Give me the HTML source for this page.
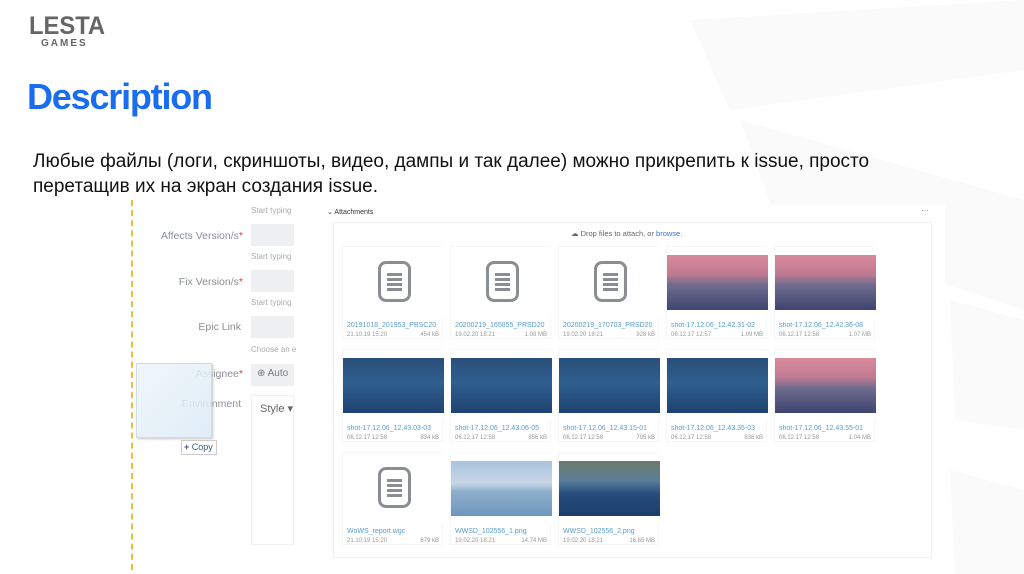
<!DOCTYPE html>
<html><head><meta charset="utf-8"><style>
*{margin:0;padding:0;box-sizing:border-box}
body{width:1024px;height:574px;overflow:hidden;background:#fff;position:relative;font-family:"Liberation Sans",sans-serif}
.a{position:absolute}
.lbl{position:absolute;right:781px;font-size:10.5px;color:#8a8f96;white-space:nowrap}
.st{position:absolute;left:251px;font-size:8px;color:#a9adb2}
.inp{position:absolute;left:251px;width:43px;height:22px;background:#eef0f2}
.tile{position:absolute;width:101px;height:93px;border:1px solid #f5f6f7}
.img{position:absolute;left:0;top:0;width:101px;height:70px;background:#fff}
.doc{position:absolute;left:35px;top:14px;width:33px;height:41px;border:3px solid #8a8d91;border-radius:8px}
.doc i{position:absolute;left:6px;width:15px;height:2.5px;background:#8a8d91}
.nm{position:absolute;left:4px;top:75px;font-size:7px;color:#5a9ccc;white-space:nowrap;width:92px;overflow:hidden}
.dt{position:absolute;left:4px;top:85px;font-size:6px;color:#999;width:92px}
.dt b{float:right;font-weight:normal}
.shot{position:absolute;left:0;top:8px;width:101px;height:55px}
.blue{background:linear-gradient(180deg,#2a4f7a 0%,#2f5f8e 45%,#1f4370 100%)}
.pink{background:linear-gradient(180deg,#d98a9a 0%,#c07a92 35%,#6f6b8e 55%,#3e4570 100%)}
.sky{background:linear-gradient(180deg,#a8c4dc 0%,#c8d6e6 40%,#8fb0cc 55%,#6d97bd 100%)}
.sea{background:linear-gradient(180deg,#6c7a6a 0%,#5b7f9a 35%,#264c7c 60%,#1b3d6b 100%)}
</style></head><body>
<svg class="a" style="left:0;top:0" width="1024" height="574"><polygon points="690,20 1024,0 1024,70 730,110" fill="#fafafa"/><polygon points="740,120 1024,200 1024,310 780,230" fill="#fafafa"/><polygon points="950,300 1024,320 1024,430 955,420" fill="#fafafa"/><polygon points="950,470 1024,490 1024,574 955,574" fill="#fafafa"/></svg>
<div class="a" style="left:29px;top:12px;font-size:25px;font-weight:bold;color:#666;transform:scaleX(0.95);transform-origin:left">LESTA</div>
<div class="a" style="left:41px;top:38px;font-size:10px;font-weight:bold;color:#666;letter-spacing:2px">GAMES</div>
<div class="a" style="left:27px;top:76px;font-size:36px;font-weight:bold;color:#1a6cf0;letter-spacing:-1.2px">Description</div>
<div class="a" style="left:33px;top:149px;font-size:19px;color:#111;line-height:25px;width:960px">Любые файлы (логи, скриншоты, видео, дампы и так далее) можно прикрепить к issue, просто<br>перетащив их на экран создания issue.</div>

<div class="a" style="left:48px;top:200px;width:282px;height:370px;background:#fff"></div>
<div class="a" style="left:131px;top:200px;height:370px;border-left:2px dashed #e8c040"></div>
<div class="st" style="top:206px">Start typing</div>
<div class="lbl" style="top:230px">Affects Version/s<span style="color:#d04040">*</span></div><div class="inp" style="top:224px"></div>
<div class="st" style="top:252px">Start typing</div>
<div class="lbl" style="top:276px">Fix Version/s<span style="color:#d04040">*</span></div><div class="inp" style="top:270px"></div>
<div class="st" style="top:298px">Start typing</div>
<div class="lbl" style="top:321px;right:783px">Epic Link</div><div class="inp" style="top:316px"></div>
<div class="st" style="top:345px">Choose an e</div>
<div class="lbl" style="top:368px">Assignee<span style="color:#d04040">*</span></div><div class="inp" style="top:364px;font-size:10px;color:#777;padding:4px 0 0 6px;white-space:nowrap;overflow:hidden">⊕ Auto</div>
<div class="lbl" style="top:398px;right:783px">Environment</div>
<div class="a" style="left:251px;top:395px;width:43px;height:150px;border:1px solid #f0f0f0;font-size:11px;color:#666;padding:6px 0 0 8px;white-space:nowrap;overflow:hidden">Style ▾</div>
<div class="a" style="left:136px;top:363px;width:76px;height:75px;background:linear-gradient(135deg,#eef5fb,#dcebf6);border:1px solid #c8d8e6;box-shadow:1px 1px 2px #bbb;opacity:.85"></div>
<div class="a" style="left:181px;top:440px;width:36px;height:15px;border:1px solid #ccc;background:#fff;font-size:9px;color:#3a5a88;padding:1px 0 0 2px"><b>+</b> Copy</div>

<div class="a" style="left:330px;top:205px;width:615px;height:362px;background:#fff"></div>
<div class="a" style="left:327px;top:208px;font-size:7px;color:#333">⌄ Attachments</div>
<div class="a" style="left:921px;top:206px;font-size:8px;color:#666">···</div>
<div class="a" style="left:333px;top:222px;width:599px;height:336px;border:1px solid #f0f1f3"></div>
<div class="a" style="left:571px;top:229px;font-size:7.5px;color:#666">☁ Drop files to attach, or <span style="color:#3b73c4">browse.</span></div>

<div class="tile" style="left:342px;top:246px"><div class="img"><div class="doc"><i style="top:9px"></i><i style="top:14px"></i><i style="top:19px"></i><i style="top:24px"></i></div></div><div class="nm">20191018_201953_PBSC20</div><div class="dt">21.10.19 15:20<b>454 kB</b></div></div>
<div class="tile" style="left:450px;top:246px"><div class="img"><div class="doc"><i style="top:9px"></i><i style="top:14px"></i><i style="top:19px"></i><i style="top:24px"></i></div></div><div class="nm">20200219_165855_PRSD20</div><div class="dt">19.02.20 18:21<b>1.08 MB</b></div></div>
<div class="tile" style="left:558px;top:246px"><div class="img"><div class="doc"><i style="top:9px"></i><i style="top:14px"></i><i style="top:19px"></i><i style="top:24px"></i></div></div><div class="nm">20200219_170703_PRSD20</div><div class="dt">19.02.20 18:21<b>928 kB</b></div></div>
<div class="tile" style="left:666px;top:246px"><div class="img"><div class="shot pink"></div></div><div class="nm">shot-17.12.06_12.42.31-02</div><div class="dt">06.12.17 12:57<b>1.09 MB</b></div></div>
<div class="tile" style="left:774px;top:246px"><div class="img"><div class="shot pink"></div></div><div class="nm">shot-17.12.06_12.42.36-08</div><div class="dt">06.12.17 12:58<b>1.07 MB</b></div></div>
<div class="tile" style="left:342px;top:349px"><div class="img"><div class="shot blue"></div></div><div class="nm">shot-17.12.06_12.43.03-03</div><div class="dt">06.12.17 12:58<b>834 kB</b></div></div>
<div class="tile" style="left:450px;top:349px"><div class="img"><div class="shot blue"></div></div><div class="nm">shot-17.12.06_12.43.06-05</div><div class="dt">06.12.17 12:58<b>856 kB</b></div></div>
<div class="tile" style="left:558px;top:349px"><div class="img"><div class="shot blue"></div></div><div class="nm">shot-17.12.06_12.43.15-01</div><div class="dt">06.12.17 12:58<b>795 kB</b></div></div>
<div class="tile" style="left:666px;top:349px"><div class="img"><div class="shot blue"></div></div><div class="nm">shot-17.12.06_12.43.35-03</div><div class="dt">06.12.17 12:58<b>838 kB</b></div></div>
<div class="tile" style="left:774px;top:349px"><div class="img"><div class="shot pink"></div></div><div class="nm">shot-17.12.06_12.43.55-01</div><div class="dt">06.12.17 12:58<b>1.04 MB</b></div></div>
<div class="tile" style="left:342px;top:452px"><div class="img"><div class="doc"><i style="top:9px"></i><i style="top:14px"></i><i style="top:19px"></i><i style="top:24px"></i></div></div><div class="nm">WoWS_report.wgc</div><div class="dt">21.10.19 15:20<b>679 kB</b></div></div>
<div class="tile" style="left:450px;top:452px"><div class="img"><div class="shot sky"></div></div><div class="nm">WWSD_102556_1.png</div><div class="dt">19.02.20 18:21<b>14.74 MB</b></div></div>
<div class="tile" style="left:558px;top:452px"><div class="img"><div class="shot sea"></div></div><div class="nm">WWSD_102556_2.png</div><div class="dt">19.02.20 18:21<b>16.65 MB</b></div></div>
</body></html>
